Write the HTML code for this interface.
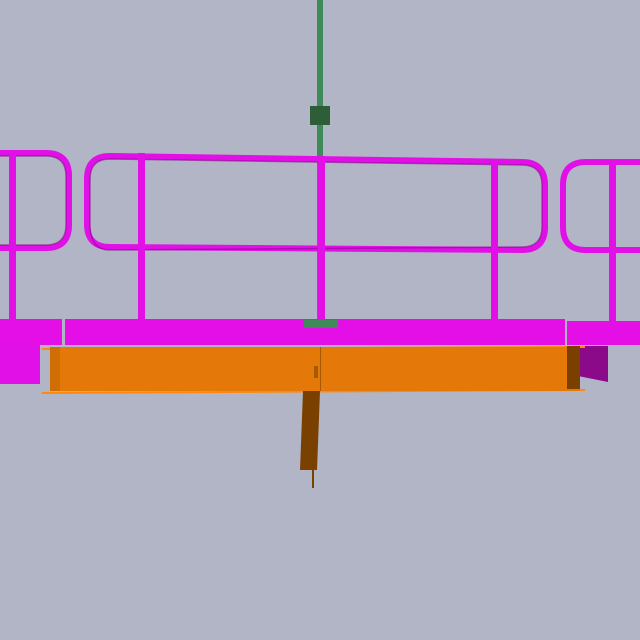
<!DOCTYPE html>
<html><head><meta charset="utf-8"><style>html,body{margin:0;padding:0;background:#b1b5c6;}svg{display:block}</style></head>
<body>
<svg width="640" height="640" viewBox="0 0 640 640" xmlns="http://www.w3.org/2000/svg">
<rect width="640" height="640" fill="#b1b5c6"/>
<rect x="317" y="0" width="6" height="322" fill="#3f8a58"/>
<rect x="310" y="106" width="20" height="19" fill="#2d5e38"/>
<g fill="none" stroke="#e010e6" stroke-width="6">
<path d="M0 153 H46 Q69 153 69 176 V225 Q69 248 46 248 H0"/>
<path d="M110 156 L522 162 Q545 162 545 185 V227 Q545 250 522 250 L110 247 Q87 247 87 224 V179 Q87 156 110 156 Z"/>
<path d="M640 162 H586 Q563 162 563 185 V227 Q563 250 586 250 H640"/>
</g>
<g fill="none" stroke="#8a0a90" stroke-width="1.5" opacity="0.6">
<path d="M0 156 H46 Q66 156 66 176 V225 Q66 245 46 245 H0"/>
<path d="M110 159 L522 165 Q542 165 542 185 V227 Q542 247 522 247 L110 250 Q90 250 90 224 V179 Q90 159 110 159 Z"/>
</g>
<g fill="#e010e6">
<rect x="9" y="150" width="7" height="172"/>
<rect x="138" y="153" width="7" height="170"/>
<rect x="318" y="156" width="7" height="167"/>
<rect x="491" y="159" width="7" height="164"/>
<rect x="609" y="159" width="7" height="164"/>
</g>
<rect x="0" y="319" width="62" height="26" fill="#e40ee6"/>
<rect x="65" y="319" width="500" height="26" fill="#e40ee6"/>
<rect x="567" y="321" width="73" height="24" fill="#e40ee6"/>
<rect x="0" y="345" width="40" height="39" fill="#e010e6"/>
<polygon points="578,346 608,346 608,382 578,376" fill="#8a0a8a"/>
<rect x="304" y="320" width="34" height="8" fill="#3f8a58"/>
<polygon points="42,348 585,346 585,348 42,350" fill="#fb8a10"/>
<polygon points="42,392 585,389 585,391 42,394" fill="#fb8a10"/>
<rect x="50" y="347" width="530" height="44" fill="#e47808"/>
<rect x="50" y="347" width="10" height="44" fill="#d06e06"/>
<rect x="567" y="346" width="13" height="43" fill="#7a4000"/>
<rect x="320" y="347" width="1" height="44" fill="#a55a00"/>
<rect x="314" y="366" width="4" height="12" fill="#a55a00"/>
<polygon points="303,391 320,391 317,470 300,470" fill="#7a4000"/>
<rect x="312" y="470" width="2" height="18" fill="#7a4000"/>
</svg>
</body></html>
